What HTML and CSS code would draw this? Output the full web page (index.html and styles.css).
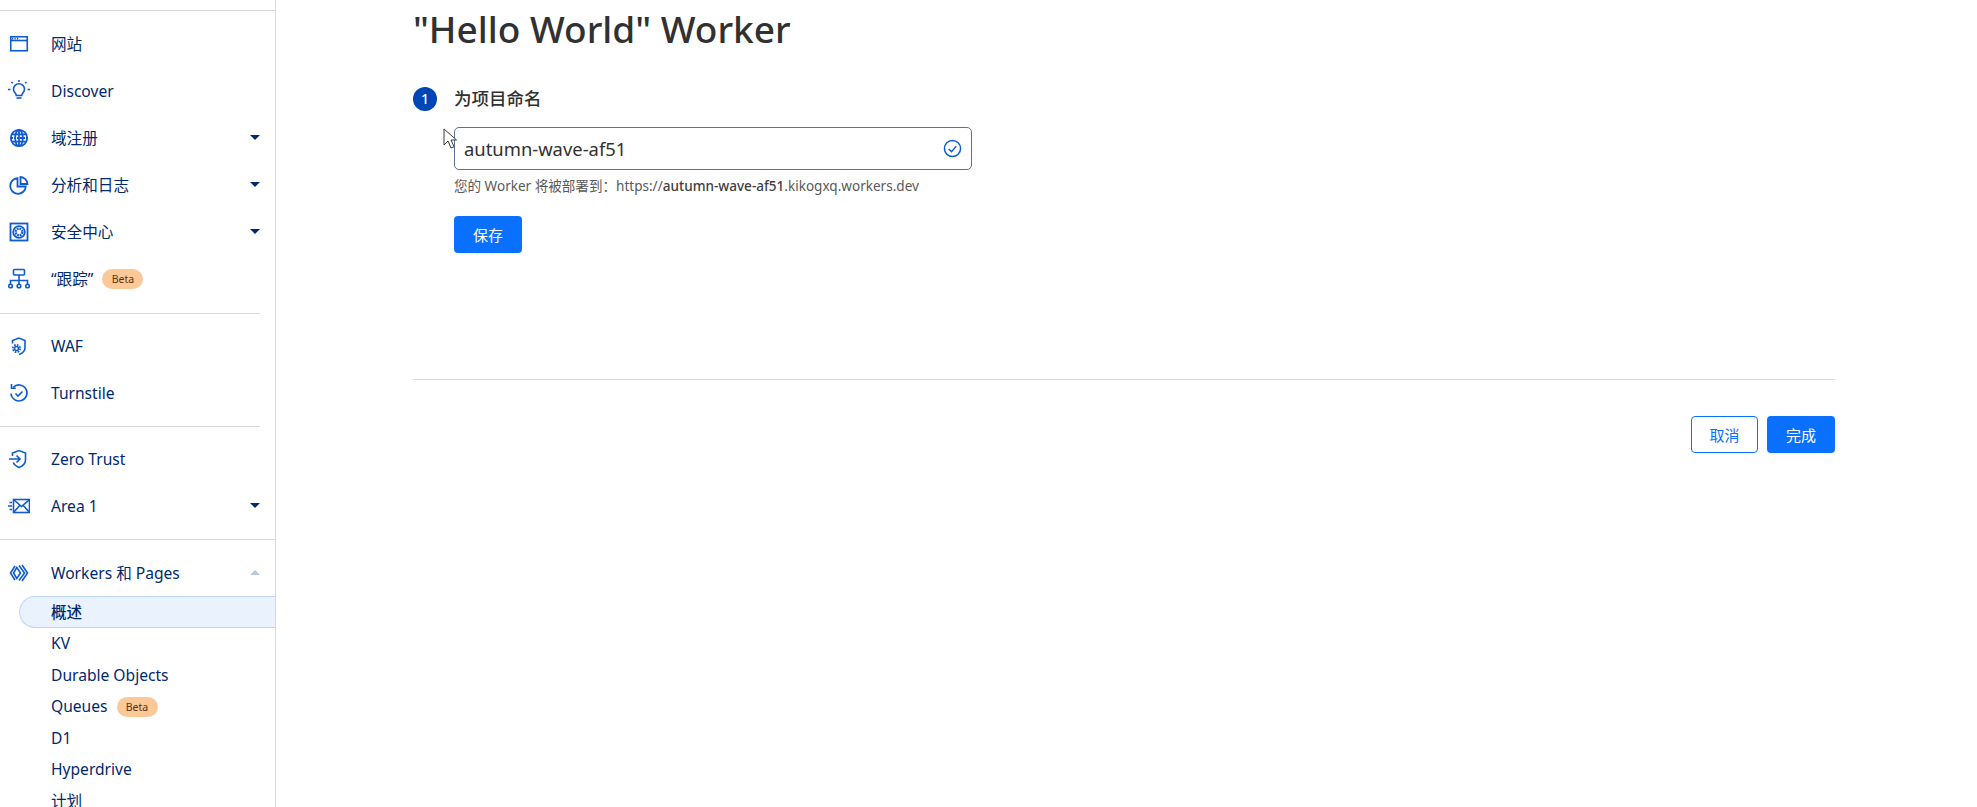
FILE: index.html
```html
<!DOCTYPE html>
<html lang="zh-CN">
<head>
  <meta charset="UTF-8" />
  <title>"Hello World" Worker</title>
  <link rel="stylesheet" href="styles.css">
</head>
<body>
  <div class="app">
    <nav class="sidebar">
      <div class="side-top"></div>

      <div class="side-group first">
        <a class="nav-item">
          <svg class="nav-icon" viewBox="0 0 22 22"><rect x="2.750" y="3.750" width="16.500" height="14" /><path d="M2 7.500h18" /><path d="M4 5.600h1.200M6.500 5.600h1.200M9 5.600h1.200" /></svg>
          <span>网站</span>
        </a>
        <a class="nav-item">
          <svg class="nav-icon" viewBox="0 0 22 22"><path d="M8.300 15.500c0-2.500-2.800-3.300-2.800-6.300a5.500 5.500 0 0 1 11 0c0 3-2.800 3.800-2.800 6.300z" /><path d="M8.500 18h5" /><path d="M11 0v2M3.500 2l1.300 1.300M18.500 2l-1.300 1.300M0 9.500h2.500M19.500 9.500H22" /></svg>
          <span>Discover</span>
        </a>
        <a class="nav-item">
          <svg class="nav-icon thick" viewBox="0 0 22 22"><circle cx="11" cy="11" r="8.200" /><ellipse cx="11" cy="11" rx="3.800" ry="8.200" /><path d="M3.500 7.300h15M3.500 14.700h15M11 3v16" /><path d="M3 11h16" stroke-dasharray="2 1" /></svg>
          <span>域注册</span>
          <i class="caret"></i>
        </a>
        <a class="nav-item">
          <svg class="nav-icon thick" viewBox="0 0 22 22"><path d="M9.500 4.200a7.800 7.800 0 1 0 8.300 8.300H9.500z" /><path d="M12.500 3a7.500 7.500 0 0 1 7 7h-7z" /></svg>
          <span>分析和日志</span>
          <i class="caret"></i>
        </a>
        <a class="nav-item">
          <svg class="nav-icon thick" viewBox="0 0 22 22"><rect x="2.500" y="2.500" width="17" height="17" /><circle cx="11" cy="11" r="5.800" /><circle cx="11" cy="11" r="3.300" stroke-width="2.200" stroke-dasharray="1.800 .8" /></svg>
          <span>安全中心</span>
          <i class="caret"></i>
        </a>
        <a class="nav-item">
          <svg class="nav-icon" viewBox="0 0 22 22"><rect x="5.500" y="1.500" width="11" height="5.500" rx="1" /><path d="M11 7v9M2.500 16v-3.500h17V16" /><circle cx="2.500" cy="18" r="1.800" /><circle cx="11" cy="18" r="1.800" /><circle cx="19.500" cy="18" r="1.800" /></svg>
          <span>“跟踪”</span>
          <b class="beta">Beta</b>
        </a>
      </div>

      <div class="side-group">
        <a class="nav-item">
          <svg class="nav-icon" viewBox="0 0 22 22"><path d="M4.500 8.500V5.500L11 3l6 2.500v7c0 3.300-2.500 5.800-6 7" /><circle cx="8.500" cy="13.500" r="2" /><circle cx="8.500" cy="13.500" r="3.700" stroke-width="1.600" stroke-dasharray="1.700 1.200" /></svg>
          <span>WAF</span>
        </a>
        <a class="nav-item">
          <svg class="nav-icon" viewBox="0 0 22 22"><path d="M5.200 5.400A8 8 0 1 1 3 11.500" /><path d="M3.500 2v4.300h4.300" /><path d="m7.500 11.500 2.500 2.500 4.500-4.500" /></svg>
          <span>Turnstile</span>
        </a>
      </div>

      <div class="side-group">
        <a class="nav-item">
          <svg class="nav-icon" viewBox="0 0 22 22"><path d="M4.500 8V5L11 2.500 17.500 5v7c0 3.500-2.800 6-6.500 7.500C8.300 18.400 6.200 16.700 5.200 14.500" /><path d="M1 11h11M8.500 7.500 12 11l-3.500 3.500" /></svg>
          <span>Zero Trust</span>
        </a>
        <a class="nav-item">
          <svg class="nav-icon wide" viewBox="0 0 22 22"><rect x="5.500" y="4.500" width="16" height="13" /><path d="m5.500 4.500 8 7 8-7M5.500 17.500l6-6.800M21.500 17.500l-6-6.800" /><path d="M1.500 7.500h2.500M0 11h4M1.500 14.500h2.500" /></svg>
          <span>Area 1</span>
          <i class="caret"></i>
        </a>
      </div>

      <div class="side-group open">
        <a class="nav-item">
          <svg class="nav-icon" viewBox="0 0 22 22"><path d="M7 4 2.500 11 7 18M14 3l5.500 8-5.500 8M11 3.500l5.500 7.500-5.500 7.500" /><path d="M8.800 5.500 5.500 11l3.300 5.500 3.700-5.500z" /></svg>
          <span>Workers 和 Pages</span>
          <i class="caret up"></i>
        </a>
        <ul class="sub-list">
          <li class="sub-item active">概述</li>
          <li class="sub-item">KV</li>
          <li class="sub-item">Durable Objects</li>
          <li class="sub-item">Queues<b class="beta">Beta</b></li>
          <li class="sub-item">D1</li>
          <li class="sub-item">Hyperdrive</li>
          <li class="sub-item">计划</li>
        </ul>
      </div>
    </nav>

    <main class="main">
      <h1 class="page-title">"Hello World" Worker</h1>

      <section class="step">
        <div class="step-head">
          <span class="step-num">1</span>
          <h2>为项目命名</h2>
        </div>
        <div class="step-body">
          <div class="name-input">
            <span>autumn-wave-af51</span>
            <svg class="ok-icon" viewBox="0 0 20 20"><circle cx="10" cy="10" r="8.500" /><path d="m6 10.500 3 2.800 5-5.800" /></svg>
          </div>
          <p class="hint">您的 Worker 将被部署到：https://<strong>autumn-wave-af51</strong>.kikogxq.workers.dev</p>
          <button class="btn primary">保存</button>
        </div>
      </section>

      <div class="actions">
        <button class="btn outline">取消</button>
        <button class="btn primary">完成</button>
      </div>
    </main>
  </div>

  <svg class="cursor" viewBox="0 0 14 22"><path d="M1 1v16l4-4 3 7 3-1.300-3-6.700h5.500z" /></svg>
</body>
</html>
```

FILE: styles.css
```css
html, body {
  margin: 0;
  height: 100%;
  overflow: hidden;
}

body {
  font-family: 'Noto Sans', 'Noto Sans CJK SC', sans-serif;
  background-color: #ffffff;
  color: #313131;
}

.app {
  display: flex;
  height: 807px;
}

/* sidebar */
.sidebar {
  width: 275px;
  flex-shrink: 0;
  border-right: 1px solid #d9d9d9;
  overflow: hidden;
}

.side-top {
  height: 10px;
  border-bottom: 1px solid #d9d9d9;
}

.side-group {
  width: 260px;
  padding: 8px 0 10px;
  border-top: 1px solid #d9d9d9;
}

.side-group.first {
  padding: 9px 0 11px;
  border-top: 0;
}

.side-group.open {
  width: 275px;
  padding: 9px 0 0;
}

.side-group.open .nav-item {
  width: 260px;
}

.nav-item {
  display: flex;
  align-items: center;
  height: 47px;
  color: #002a6e;
  font-size: 15.600px;
}

.nav-icon {
  width: 22px;
  height: 22px;
  margin-left: 8px;
  margin-right: 21px;
  flex-shrink: 0;
  fill: none;
  stroke: #0f5bd0;
  stroke-width: 1.6;
}

.nav-icon.thick {
  stroke-width: 1.8;
}

.caret {
  margin-left: auto;
  border-left: 5px solid transparent;
  border-right: 5px solid transparent;
  border-top: 5px solid #002a6e;
}

.caret.up {
  border-top: 0;
  border-bottom: 5px solid #b9c7dc;
}

.beta {
  display: inline-block;
  width: 41px;
  height: 20px;
  margin-left: 9px;
  line-height: 20px;
  text-align: center;
  vertical-align: 1px;
  border-radius: 10px;
  background-color: #fbc898;
  color: #5c3310;
  font-size: 10.500px;
  font-weight: normal;
}

.sub-list {
  list-style: none;
  margin: 0;
  padding: 0;
}

.sub-item {
  height: 31.500px;
  line-height: 31.500px;
  margin-left: 19px;
  padding-left: 32px;
  color: #002a6e;
  font-size: 15.600px;
}

.sub-item.active {
  box-sizing: border-box;
  height: 32px;
  line-height: 30px;
  background-color: #e9f2fd;
  border: 1px solid #bcd6fa;
  border-right: 0;
  border-radius: 16px 0 0 16px;
  padding-left: 31px;
  font-weight: 500;
}

/* main */
.main {
  flex: 1;
  min-width: 0;
  padding: 0 142px 0 137px;
}

.page-title {
  margin: 6px 0 0;
  font-size: 37px;
  line-height: 46px;
  font-weight: 500;
  color: #313131;
}

.step {
  height: 292px;
  margin-top: 35px;
  border-bottom: 1px solid #d9d9d9;
}

.step-head {
  display: flex;
  align-items: center;
  gap: 17px;
}

.step-num {
  width: 24px;
  height: 24px;
  border-radius: 50%;
  background-color: #0045b5;
  color: #ffffff;
  font-size: 14px;
  font-weight: 500;
  line-height: 24px;
  text-align: center;
}

.step-head h2 {
  margin: -2px 0 0;
  font-size: 17.500px;
  line-height: 24px;
  font-weight: 500;
  color: #313131;
}

.step-body {
  padding: 16px 0 0 41px;
}

.name-input {
  box-sizing: border-box;
  display: flex;
  align-items: center;
  justify-content: space-between;
  width: 518px;
  height: 43px;
  padding: 0 9px;
  border: 1px solid #5a7297;
  border-radius: 5px;
  font-size: 18.400px;
  color: #313131;
}

.ok-icon {
  width: 19px;
  height: 19px;
  fill: none;
  stroke: #0a5ad0;
  stroke-width: 1.5;
}

.hint {
  margin: 7px 0 21px;
  font-size: 13.550px;
  line-height: 18px;
  color: #595959;
}

.hint strong {
  font-weight: 500;
  color: #404040;
}

.btn {
  box-sizing: border-box;
  width: 68px;
  height: 37px;
  border-radius: 4px;
  font-family: inherit;
  font-size: 15px;
  cursor: pointer;
}

.btn.primary {
  background-color: #0a70ff;
  border: 0;
  color: #ffffff;
}

.btn.outline {
  width: 67px;
  background-color: #ffffff;
  border: 1px solid #0a70ff;
  color: #0a70ff;
}

.actions {
  display: flex;
  justify-content: flex-end;
  gap: 9px;
  margin-top: 36px;
}

/* mouse pointer caught by the screenshot */
.cursor {
  position: absolute;
  left: 443px;
  top: 128px;
  width: 14px;
  height: 22px;
  fill: #ffffff;
  stroke: #3a3a3a;
  stroke-width: 1;
}
```
